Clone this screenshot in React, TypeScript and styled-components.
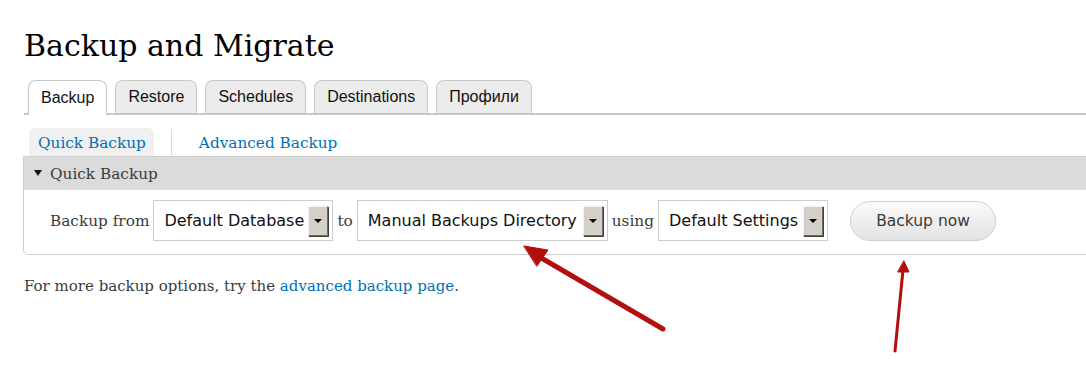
import React from "react";
import styled, { createGlobalStyle } from "styled-components";

const Global = createGlobalStyle`
  html, body { margin: 0; padding: 0; background: #fff; }
  body { font-family: "DejaVu Serif", Georgia, serif; color: #3b3b3b; }
`;

const Page = styled.div`
  position: relative;
  width: 1086px;
  height: 371px;
  overflow: hidden;
  padding: 28px 0 0 24px;
  box-sizing: border-box;
`;

const Title = styled.h1`
  margin: 0 0 16px 0;
  font-family: "DejaVu Serif", Georgia, serif;
  font-weight: normal;
  font-size: 30px;
  line-height: 36px;
  color: #000;
`;

const TabBar = styled.ul`
  display: flex;
  gap: 8px;
  list-style: none;
  margin: 0;
  padding: 0 0 0 4px;
  border-bottom: 2px solid #c8c8c8;
  height: 33px;
  box-sizing: content-box;
`;

const Tab = styled.li<{ $active?: boolean }>`
  display: flex;
  align-items: center;
  padding: 0 12px;
  height: ${(p) => (p.$active ? "35px" : "33px")};
  box-sizing: border-box;
  font-family: "Liberation Sans", Arial, sans-serif;
  font-size: 16px;
  color: #111;
  background: ${(p) => (p.$active ? "#fff" : "#ececec")};
  border: 1px solid #c8c8c8;
  border-bottom: none;
  border-radius: 8px 8px 0 0;
  margin-bottom: ${(p) => (p.$active ? "-2px" : "0")};
`;

const SubTabs = styled.div`
  display: flex;
  align-items: center;
  margin-top: 13px;
  padding-left: 5px;
`;

const SubTab = styled.a<{ $active?: boolean }>`
  font-family: "DejaVu Serif", Georgia, serif;
  font-size: 15.3px;
  color: #0071b3;
  text-decoration: none;
  padding: 6px 8px 4px 9px;
  border-radius: 6px 6px 0 0;
  background: ${(p) => (p.$active ? "#f0f0f0" : "transparent")};
`;

const Divider = styled.span`
  width: 1px;
  height: 26px;
  background: #d8d8d8;
  margin: 0 18px 0 17px;
`;

const Fieldset = styled.section`
  margin-left: -1px;
  width: 1100px;
  border: 1px solid #cfcfcf;
  border-radius: 0 0 0 5px;
`;

const Legend = styled.div`
  display: flex;
  align-items: center;
  gap: 8px;
  height: 33px;
  padding-left: 10px;
  background: #dbdbdb;
  font-family: "DejaVu Serif", Georgia, serif;
  font-size: 15.3px;
  color: #3b3b3b;
`;

const Caret = styled.span`
  width: 0;
  height: 0;
  border-left: 4px solid transparent;
  border-right: 4px solid transparent;
  border-top: 6px solid #111;
  margin-top: -2px;
`;

const Row = styled.div`
  display: flex;
  align-items: center;
  gap: 4px;
  padding: 10px 0 13px 26px;
`;

const Label = styled.span`
  font-family: "DejaVu Serif", Georgia, serif;
  font-size: 15.3px;
  color: #3b3b3b;
`;

const Select = styled.div<{ $w: number }>`
  display: flex;
  align-items: center;
  justify-content: space-between;
  width: ${(p) => p.$w}px;
  height: 41px;
  box-sizing: border-box;
  border: 1px solid #cccccc;
  background: #fff;
  padding: 0 4px 0 10px;
  font-family: "DejaVu Sans", Verdana, sans-serif;
  font-size: 16px;
  color: #111;
`;

const DropBtn = styled.span`
  width: 20px;
  height: 30px;
  box-sizing: border-box;
  background: #d4d0c8;
  border: 1px solid;
  border-color: #f4f2ee #6f6c66 #6f6c66 #f4f2ee;
  box-shadow: 1px 1px 0 #404040;
  display: flex;
  align-items: center;
  justify-content: center;
  &::after {
    content: "";
    border-left: 4px solid transparent;
    border-right: 4px solid transparent;
    border-top: 4px solid #000;
  }
`;

const Button = styled.button`
  margin-left: 18px;
  height: 40px;
  width: 146px;
  border: 1px solid #cfcfcf;
  border-radius: 20px;
  background: linear-gradient(#fafafa, #e3e3e3);
  font-family: "DejaVu Sans", Verdana, sans-serif;
  font-size: 15.5px;
  color: #3a3a3a;
`;

const Note = styled.p`
  margin: 22px 0 0 0;
  font-family: "DejaVu Serif", Georgia, serif;
  font-size: 15px;
  color: #3b3b3b;
  a { color: #0071b3; text-decoration: none; }
`;

const Arrows = styled.svg`
  position: absolute;
  left: 0;
  top: 0;
  pointer-events: none;
`;

export default function App() {
  return (
    <>
      <Global />
      <Page>
        <Title>Backup and Migrate</Title>
        <TabBar>
          <Tab $active>Backup</Tab>
          <Tab>Restore</Tab>
          <Tab>Schedules</Tab>
          <Tab>Destinations</Tab>
          <Tab>Профили</Tab>
        </TabBar>
        <SubTabs>
          <SubTab $active>Quick Backup</SubTab>
          <Divider />
          <SubTab>Advanced Backup</SubTab>
        </SubTabs>
        <Fieldset>
          <Legend>
            <Caret />
            Quick Backup
          </Legend>
          <Row>
            <Label>Backup from</Label>
            <Select $w={180}>
              Default Database
              <DropBtn />
            </Select>
            <Label>to</Label>
            <Select $w={251}>
              Manual Backups Directory
              <DropBtn />
            </Select>
            <Label>using</Label>
            <Select $w={170}>
              Default Settings
              <DropBtn />
            </Select>
            <Button>Backup now</Button>
          </Row>
        </Fieldset>
        <Note>
          For more backup options, try the <a>advanced backup page</a>.
        </Note>
        <Arrows width="1086" height="371" viewBox="0 0 1086 371">
          <g stroke="#b20f0f" strokeWidth="5" strokeLinecap="round" fill="#b20f0f">
            <line x1="663" y1="329" x2="538" y2="256" />
            <polygon points="524,246 548,250 537,266" strokeWidth="1" />
          </g>
          <g stroke="#b20f0f" strokeWidth="3" strokeLinecap="round" fill="#b20f0f">
            <line x1="895" y1="351" x2="903" y2="270" />
            <polygon points="904,261 909,272 898,272" strokeWidth="1" />
          </g>
        </Arrows>
      </Page>
    </>
  );
}
